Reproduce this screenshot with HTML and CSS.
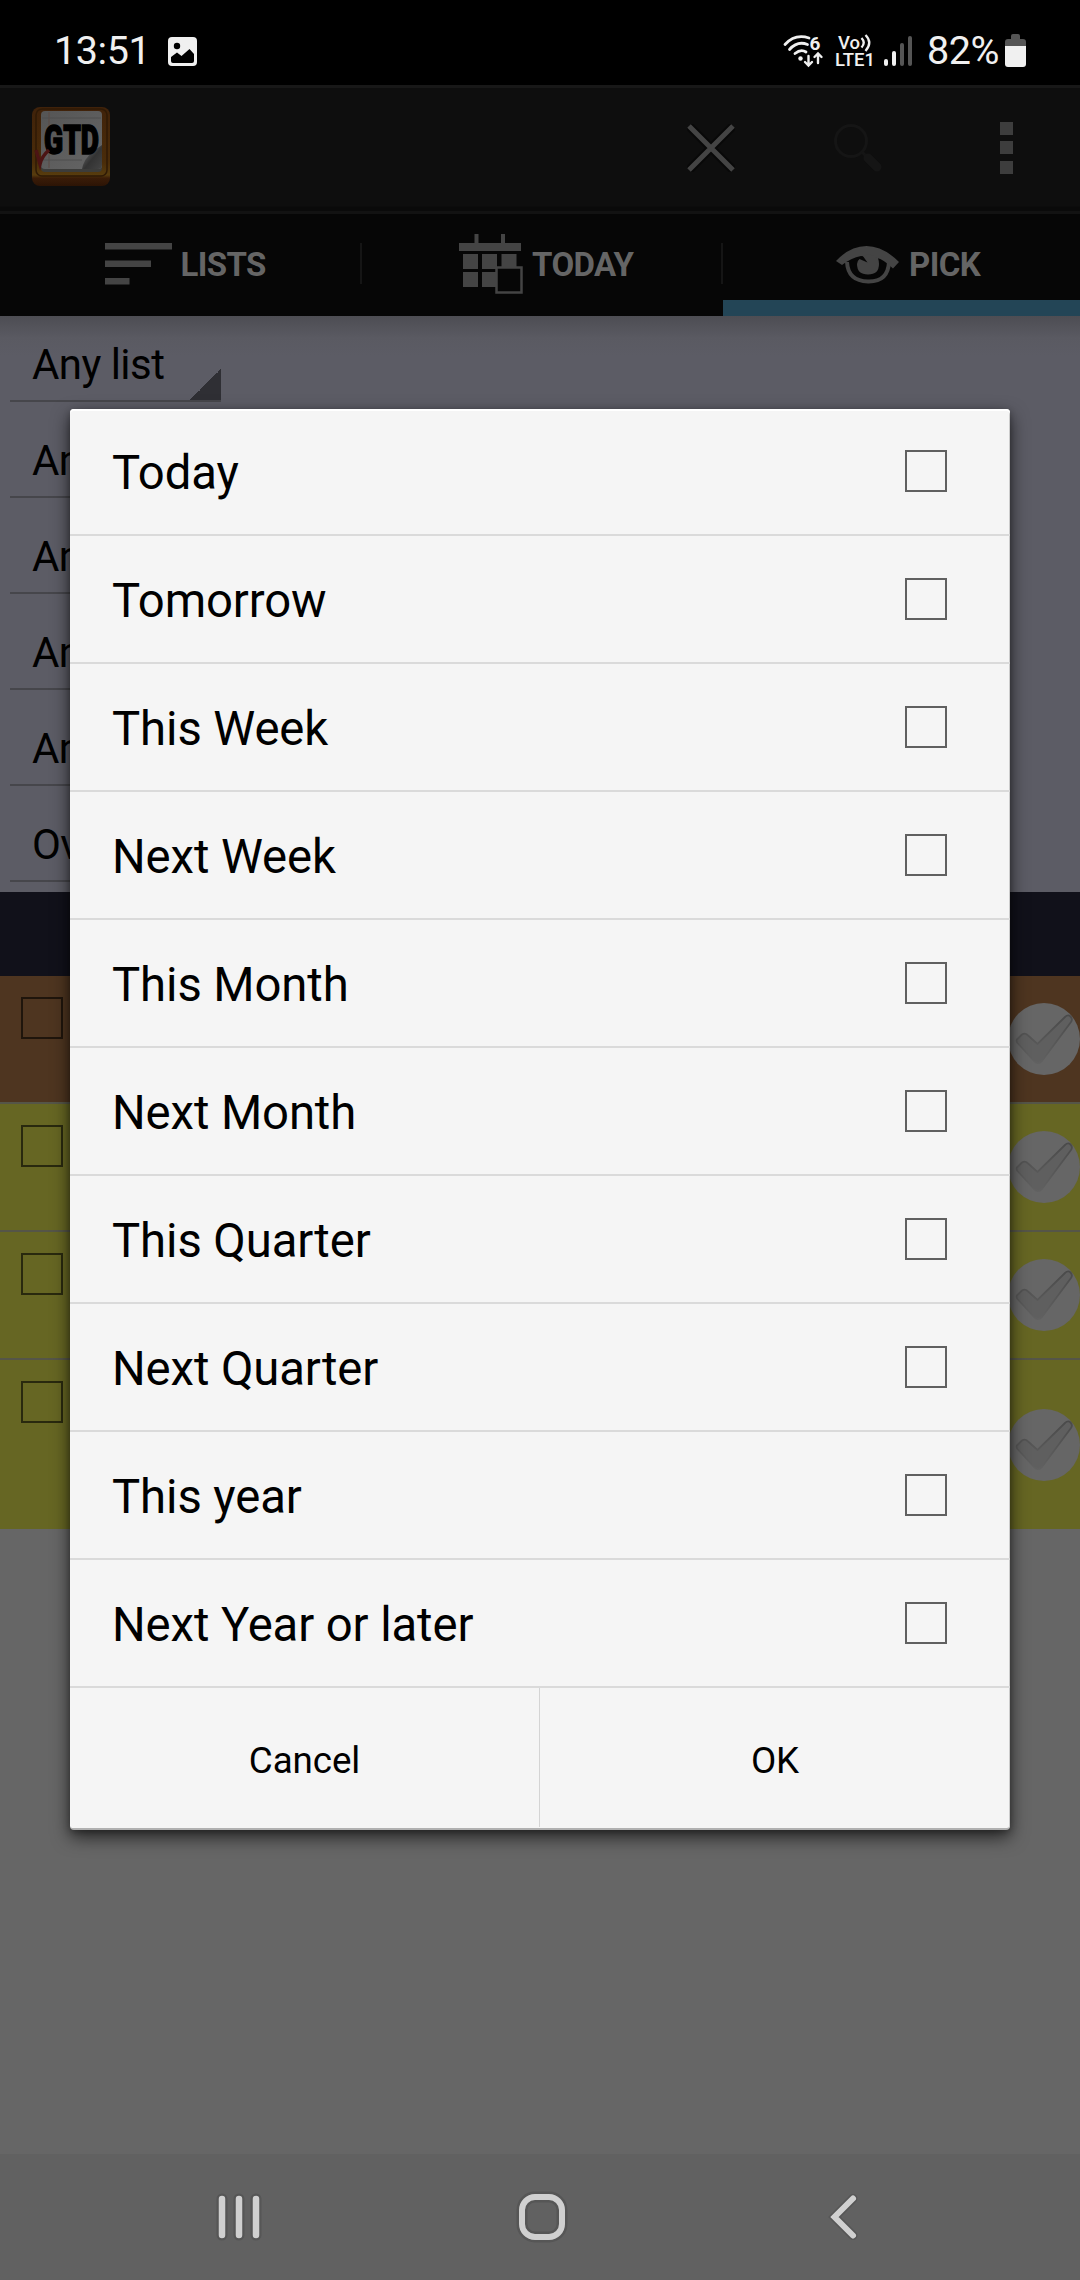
FILE: index.html
```html
<!DOCTYPE html>
<html lang="en">
<head>
<meta charset="utf-8">
<title>GTD</title>
<link rel="stylesheet" href="styles.css">
</head>
<body>
<div class="screen">
  <header class="status">
    <span class="clock">13:51</span>
    <svg class="photo" width="30" height="30" viewBox="0 0 30 30"><rect x="0" y="0" width="29" height="29" rx="4" fill="#f0f0f0"/><circle cx="9" cy="9" r="3.2" fill="#000"/><path d="M3 20l6-4.5 4.500 3.500L21.500 12 26 17v7q0 2-2 2H5q-2 0-2-2z" fill="#000"/></svg>
    <svg class="wifi" width="42" height="34" viewBox="0 0 42 34" fill="none" stroke="#f0f0f0" stroke-width="2.800" stroke-linecap="round"><path d="M2 10.500Q12-.5 26 4M6.500 15.500Q14.500 6.500 24.500 10.500M12 19.500Q18 14.500 23 18"/><circle cx="17.500" cy="24.500" r="2.200" fill="#f0f0f0" stroke="none"/><path d="M25.500 22v9M22 28l3.500 3.500L29 28M35 29V20M31.500 23l3.500-3.500 3.500 3.500" stroke-width="2.400"/><text class="wifi-gen" x="26.500" y="15.500">6</text></svg>
    <div class="volte"><span>Vo<svg width="12" height="18" viewBox="0 0 12 18" fill="none" stroke="#f0f0f0" stroke-width="2.300"><path d="M1.500 4Q6 8.500 1.500 13.500M5.500 1Q13 8.500 5.500 17"/></svg></span><span class="lte">LTE1</span></div>
    <svg class="signal" width="28" height="30" viewBox="0 0 28 30"><g fill="#f0f0f0"><rect x="0" y="23" width="4" height="7" rx="2"/><rect x="8" y="15" width="4" height="15" rx="2"/></g><g fill="#555"><rect x="16" y="7" width="4" height="23" rx="2"/><rect x="24" y="0" width="4" height="30" rx="2"/></g></svg>
    <span class="percent">82%</span>
    <svg class="battery" width="21" height="33" viewBox="0 0 21 33"><path d="M6 5V2q0-2 2-2h5q2 0 2 2v3h3q3 0 3 3v4H0V8q0-3 3-3z" fill="#555"/><path d="M0 12h21v18q0 3-3 3H3q-3 0-3-3z" fill="#f0f0f0"/></svg>
  </header>

  <div class="actionbar">
    <svg class="app" width="84" height="84" viewBox="0 0 84 84">
      <defs>
        <linearGradient id="wood" x2="0" y2="1"><stop offset="0" stop-color="#40220a"/><stop offset=".7" stop-color="#4a2c09"/><stop offset=".86" stop-color="#573c0e"/><stop offset=".9" stop-color="#3a1c08"/><stop offset="1" stop-color="#2c1405"/></linearGradient>
        <linearGradient id="paper" x2="1" y2="1"><stop offset="0" stop-color="#555"/><stop offset="1" stop-color="#656565"/></linearGradient>
        <linearGradient id="curl" x2="1" y2="1"><stop offset="0" stop-color="#777"/><stop offset=".55" stop-color="#333"/><stop offset="1" stop-color="#444"/></linearGradient>
      </defs>
      <rect x="2" y="2" width="78" height="79" rx="8" fill="url(#wood)"/>
      <rect x="6" y="4" width="71" height="67" rx="6" fill="none" stroke="#2f1a06" stroke-width="1.500"/>
      <rect x="11" y="8" width="61" height="59" rx="4" fill="#3c3c3a"/>
      <rect x="11" y="6" width="61" height="58" rx="4" fill="url(#paper)"/>
      <path d="M19 7v56" stroke="#5a4a44"/><path d="M12 13h59M12 55h40" stroke="#4f4f4f"/>
      <path d="M53 60Q56 50 72 40v20q0 4-4 4H52z" fill="url(#curl)"/>
      <text class="app-name" x="14" y="49" textLength="55" lengthAdjust="spacingAndGlyphs">GTD</text>
      <path d="M6 45l4 14q2-8 9-14" fill="none" stroke="#4c1414" stroke-width="3.500"/>
    </svg>
    <div class="actions">
      <svg width="48" height="48" viewBox="0 0 48 48"><path d="M2 2l44 44M46 2L2 46" stroke="#000" stroke-opacity=".4" stroke-width="9"/><path d="M2 2l44 44M46 2L2 46" stroke="#444" stroke-width="5"/></svg>
      <svg width="48" height="48" viewBox="0 0 48 48" fill="none" stroke="#151515"><circle cx="17" cy="17" r="15.500" stroke-width="3"/><path d="M28 28l5 5" stroke-width="3"/><path d="M34 34l9 9" stroke-width="9" stroke-linecap="round"/></svg>
      <svg width="13" height="52" viewBox="0 0 13 52" fill="#3d3d3d"><path d="M0 0h13v13H0zM0 19h13v13H0zM0 39h13v13H0z"/></svg>
    </div>
  </div>

  <nav class="tabs">
    <div class="tab">
      <svg width="67" height="42" viewBox="0 0 67 42" fill="#444"><path d="M0 0h67v6.500H0zM0 17.500h46V24H0zM0 35h24.500v6.500H0z"/></svg><span>LISTS</span>
    </div>
    <div class="tab">
      <svg class="cal" width="64" height="60" viewBox="0 0 64 60" fill="#444"><path d="M0 9h15.500V0h4v9h22.500V0h4v9H62v8H0zM4 20h15v15H4zM23 20h15v15H23zM42.500 20h15v15h-15zM4 38h15v15H4zM23 38h15v15H23z"/><rect x="37.500" y="33.500" width="25" height="25" fill="#060606" stroke="#444" stroke-width="2.500"/></svg><span>TODAY</span>
    </div>
    <div class="tab active">
      <svg class="eye" width="64" height="40" viewBox="0 0 64 40"><path d="M11 17Q12 36 32 36.500T53 17" fill="none" stroke="#444" stroke-width="4"/><path d="M0 16Q14 1 30.500 1T63 17l-6 6.500Q47 14 41 13L25 11Q15 13 6 20z" fill="#444"/><path d="M26.500 10.500l5 7-8-3.500Q21 16 21 19q0 10.500 11 10.500T43 19q0-3-1-6l-8-3.500z" fill="#444"/></svg><span>PICK</span>
    </div>
  </nav>

  <section class="filters">
    <div class="spinner">Any list</div>
    <div class="spinner">Any</div>
    <div class="spinner">Any</div>
    <div class="spinner">Any</div>
    <div class="spinner">Any</div>
    <div class="spinner">Ove</div>
  </section>
  <div class="band"></div>

  <svg width="0" height="0" class="symbols">
    <defs>
      <linearGradient id="tick" x2="0" y2="1"><stop offset="0" stop-color="#4a4a4a"/><stop offset="1" stop-color="#616161"/></linearGradient>
      <symbol id="done" viewBox="0 0 72 72"><circle cx="36" cy="36" r="36" fill="#666"/><path d="M9 36.500l5-5q3-2 5.500.5l10 9L57 14q3-3 5.500-.5t.5 5.500L34 58q-4 4-8 0L9.500 40q-1.500-2-.5-3.500z" fill="#5f5f5f" stroke="url(#tick)" stroke-width="1.800"/></symbol>
    </defs>
  </svg>
  <section class="tasks">
    <div class="task orange"><i class="box"></i><svg width="72" height="72"><use href="#done"/></svg></div>
    <div class="task"><i class="box"></i><svg width="72" height="72"><use href="#done"/></svg></div>
    <div class="task"><i class="box"></i><svg width="72" height="72"><use href="#done"/></svg></div>
    <div class="task tall"><i class="box"></i><svg width="72" height="72"><use href="#done"/></svg></div>
  </section>

  <footer class="navbar">
    <svg width="50" height="54" viewBox="0 0 50 54" fill="none" stroke-linecap="round"><path d="M8 9v36M25 9v36M42 9v36" stroke="#565656" stroke-width="11"/><path d="M8 9v36M25 9v36M42 9v36" stroke="#d0d0d0" stroke-width="6.500"/></svg>
    <svg class="home" width="54" height="54" viewBox="0 0 54 54" fill="none"><rect x="7" y="7" width="40" height="40" rx="13" stroke="#565656" stroke-width="11"/><rect x="7" y="7" width="40" height="40" rx="13" stroke="#d0d0d0" stroke-width="6"/></svg>
    <svg width="34" height="54" viewBox="0 0 34 54" fill="none" stroke-linecap="round"><path d="M27 8.500L8.500 27 27 45.500" stroke="#565656" stroke-width="9"/><path d="M27 8.500L8.500 27 27 45.500" stroke="#d0d0d0" stroke-width="6"/></svg>
  </footer>

  <div class="dialog">
    <div class="option"><span>Today</span><i class="check"></i></div>
    <div class="option"><span>Tomorrow</span><i class="check"></i></div>
    <div class="option"><span>This Week</span><i class="check"></i></div>
    <div class="option"><span>Next Week</span><i class="check"></i></div>
    <div class="option"><span>This Month</span><i class="check"></i></div>
    <div class="option"><span>Next Month</span><i class="check"></i></div>
    <div class="option"><span>This Quarter</span><i class="check"></i></div>
    <div class="option"><span>Next Quarter</span><i class="check"></i></div>
    <div class="option"><span>This year</span><i class="check"></i></div>
    <div class="option"><span>Next Year or later</span><i class="check"></i></div>
    <div class="buttons"><div>Cancel</div><div>OK</div></div>
  </div>
</div>
</body>
</html>
```
FILE: styles.css
```css
* { box-sizing: border-box; }
body { margin: 0; background: #666; font-family: Roboto, sans-serif; color: #000; }
svg { display: block; flex: none; }
.screen { position: relative; width: 1080px; height: 2280px; overflow: hidden; display: flex; flex-direction: column; background: #666; }
.screen > * { flex: none; }

.status { height: 85px; background: #000; color: #f0f0f0; display: flex; align-items: flex-start; padding: 34px 54px 0 54px; }
.clock, .percent { font-size: 39.500px; line-height: 46px; margin-top: -7px; white-space: nowrap; padding-top: 1px; letter-spacing: -.4px; }
.clock { width: 114px; }
.photo { margin-top: 3px; }
.wifi { margin-left: 585px; overflow: visible; }
.wifi-gen { font: 700 19px Roboto, sans-serif; fill: #f0f0f0; stroke: none; }
.volte { width: 49px; margin-left: 10px; display: flex; flex-direction: column; font-weight: 500; font-size: 18.500px; line-height: 18px; }
.volte span { display: flex; height: 17px; }
.volte span:first-child { padding-left: 3px; }
.volte .lte { line-height: 19px; }
.signal { margin-top: 2px; }
.percent { width: 78px; margin-left: 15px; }

.actionbar { height: 129px; display: flex; align-items: flex-start; justify-content: space-between; padding: 16px 67px 0 30px; background: linear-gradient(#181818 3px, #0e0e0e 3px, #0e0e0e 121px, #0a0a0a 122px, #0a0a0a 126px, #121212 126px); }
.app { margin-top: 4px; overflow: visible; }
.app-name { font: 900 40px Roboto, sans-serif; fill: #000; stroke: #000; stroke-width: 1.5; }
.actions { display: flex; align-items: center; padding-top: 21px; }
.actions svg:nth-child(2) { margin-left: 99px; }
.actions svg:nth-child(3) { margin-left: 118px; }

.tabs { height: 102px; background: #060606; display: grid; grid-template-columns: 362px 361px 357px; color: #656565; font-weight: 700; font-size: 33px; letter-spacing: -.6px; }
.tab { display: flex; align-items: center; padding-bottom: 3px; background: linear-gradient(#151515, #151515) right 29px / 2px 41px no-repeat; }
.tab:nth-child(1) { padding-left: 104.500px; }
.tab:nth-child(2) { padding-left: 97px; }
.tab:nth-child(3) { padding: 0 0 1px 113px; background: linear-gradient(#234556, #234556) bottom / 100% 16px no-repeat; }
.tab span { padding: 2px 0 0 9px; }
.tab:nth-child(3) span { padding-top: 0; }

.filters { height: 576px; background: linear-gradient(#4d4d53, #5a5a62 22px, #5c5c65 40px); padding-left: 10px; font-size: 42px; line-height: 49px; letter-spacing: -.55px; }
.spinner { width: 210.500px; height: 96px; padding: 34px 0 0 22px; border-bottom: 2px solid #46464b; background: linear-gradient(135deg, transparent 50%, #2f2f34 50%) right bottom / 31px 31px no-repeat; }
.spinner:first-child { height: 86px; padding-top: 24px; }

.band { height: 84px; background: #11111a; }
.tasks { display: flex; flex-direction: column; gap: 2px; background: #555548; }
.task { height: 126px; display: flex; justify-content: space-between; align-items: center; background: #666623; }
.orange { background: #4e3520; }
.tall { height: 169px; }
.box { width: 42px; height: 42px; margin: 21px 0 0 21px; align-self: flex-start; border: 2px solid rgba(0,0,0,.6); }

.navbar { margin-top: auto; height: 126px; background: #616161; display: flex; align-items: center; justify-content: space-between; padding: 0 220px 0 214px; }
.home { margin-right: 7px; }

.dialog { position: absolute; left: 70px; top: 409px; width: 940px; height: 1421px; border-radius: 4px; background: #f5f5f5; border-bottom: 2px solid #b0b0b0; box-shadow: inset 0 2px 0 #fff, inset -1px 0 0 #ccc, 0 7px 18px rgba(0,0,0,.65), 0 2px 6px rgba(0,0,0,.25); }
.option { height: 128px; padding: 0 63px 0 42px; border-bottom: 2px solid #dadada; display: flex; align-items: center; justify-content: space-between; font-size: 47.250px; line-height: 56px; letter-spacing: -.1px; }
.option span { padding-top: 4px; }
.option:first-child { margin-top: -1px; }
.check { width: 42px; height: 42px; border: 2px solid #606060; }
.buttons { height: 139px; display: grid; grid-template: 139px / 470px 470px; font-size: 36.750px; text-align: center; line-height: 146px; letter-spacing: -.1px; }
.buttons div:first-child { border-right: 1px solid #d4d4d4; }
```
